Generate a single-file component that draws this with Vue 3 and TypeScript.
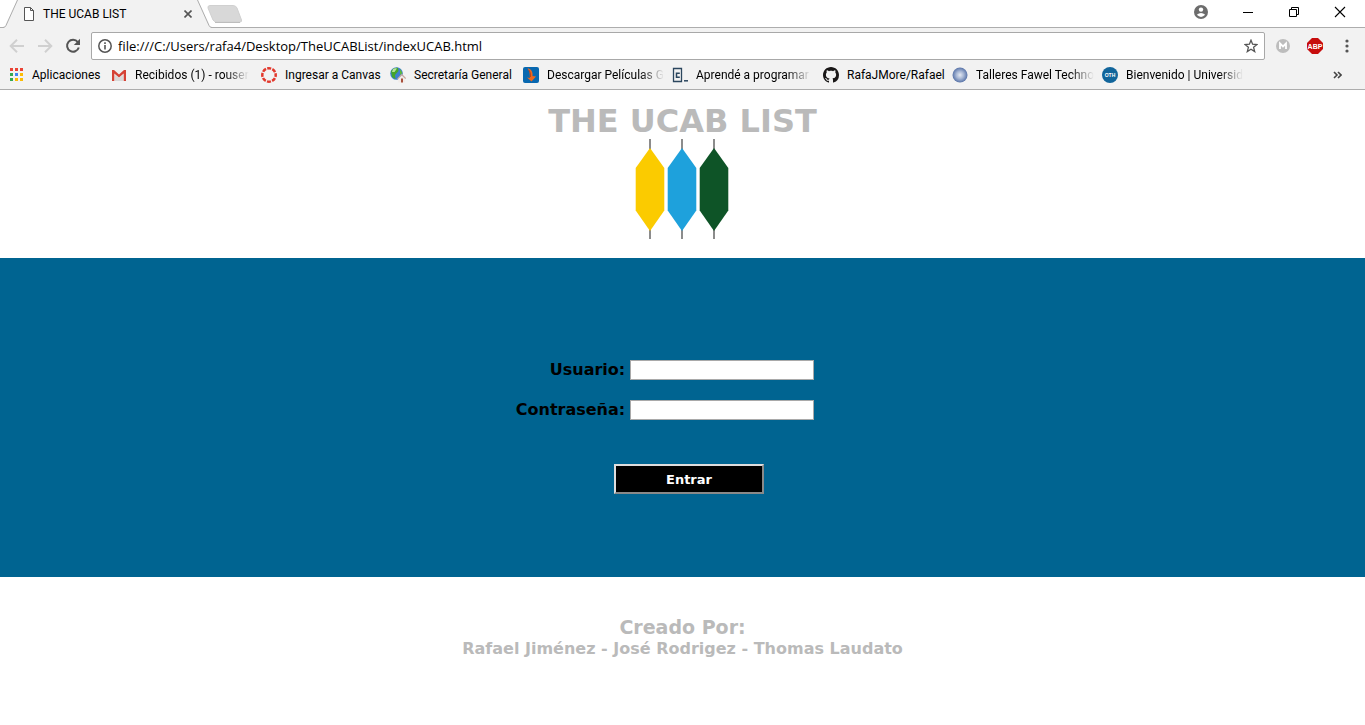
<script setup lang="ts">
import { ref } from 'vue'

interface Bookmark {
  icon: string
  label: string
  width: number
  faded?: boolean
}

const bookmarks: Bookmark[] = [
  { icon: 'apps', label: 'Aplicaciones', width: 103 },
  { icon: 'gmail', label: 'Recibidos (1) - rouser', width: 150, faded: true },
  { icon: 'canvas', label: 'Ingresar a Canvas', width: 129 },
  { icon: 'globe', label: 'Secretaría General', width: 133 },
  { icon: 'flame', label: 'Descargar Películas G', width: 149, faded: true },
  { icon: 'code', label: 'Aprendé a programar', width: 151, faded: true },
  { icon: 'github', label: 'RafaJMore/Rafael', width: 129 },
  { icon: 'orb', label: 'Talleres Fawel Techno', width: 150, faded: true },
  { icon: 'oth', label: 'Bienvenido | Universid', width: 150, faded: true },
]

const appColors = ['#ea4335', '#ea4335', '#ea4335', '#34a853', '#4285f4', '#fbbc05', '#34a853', '#fbbc05', '#fbbc05']

const shapes = [
  { x: 18, color: '#fbcb00' },
  { x: 50, color: '#1ea1dc' },
  { x: 82, color: '#0e5427' },
]

const address = ref('file:///C:/Users/rafa4/Desktop/TheUCABList/indexUCAB.html')
const user = ref('')
const password = ref('')
</script>

<template>
  <div class="window">
    <header class="browser">
      <div class="tabstrip">
        <div class="tab">
          <svg class="tab-shape" width="212" height="28" viewBox="0 0 212 28">
            <path d="M4 28 L5 26 L17 0 H198 L210 26 L211 28 Z" fill="#f2f2f2" />
            <path d="M0 27.500 H3 Q5 27.500 6 25.500 L17.500 0 M197.500 0 L209 25.500 Q210 27.500 212 27.500" fill="none" stroke="#adadad" />
          </svg>
          <svg class="tab-icon" width="12" height="14" viewBox="0 0 12 14">
            <path d="M1.500 .5 H7.500 L10.500 3.500 V13.500 H1.500 Z M7.500 .5 V3.500 H10.500" fill="#fff" stroke="#555" />
          </svg>
          <span class="tab-title">THE UCAB LIST</span>
          <button class="plain" type="button" aria-label="Cerrar pestaña">
            <svg width="8" height="8" viewBox="0 0 8 8"><path d="M0.500 .5 L7.500 7.500 M7.500 .5 L.5 7.500" stroke="#555" stroke-width="1.600" /></svg>
          </button>
        </div>
        <button class="plain new-tab" type="button" aria-label="Nueva pestaña">
          <svg width="36" height="18" viewBox="0 0 36 18"><path d="M3 .5 H26 Q29 .5 30 3 L34.500 15 Q35 17 33 17 H10 Q7 17 6 15 L1 3 Q.5 .5 3 .5Z" fill="#d8d8d8" stroke="#d0d0d0" /><path d="M8 17.500 H33" stroke="#bdbdbd" /></svg>
        </button>
        <div class="controls">
          <button class="plain" type="button" aria-label="Perfil">
            <svg width="14" height="14" viewBox="0 0 14 14"><circle cx="7" cy="7" r="7" fill="#6c6c6c" /><circle cx="7" cy="4.600" r="2.200" fill="#fff" /><path d="M2.800 9.800 Q7 6.200 11.200 9.800 Q7 14 2.800 9.800Z" fill="#fff" /></svg>
          </button>
          <button class="plain" type="button" aria-label="Minimizar">
            <svg width="12" height="12" viewBox="0 0 12 12"><path d="M1 6.500 H11" stroke="#000" /></svg>
          </button>
          <button class="plain" type="button" aria-label="Restaurar">
            <svg width="12" height="12" viewBox="0 0 12 12"><path d="M1.500 3.500 H8.500 V10.500 H1.500Z M3.500 3.500 V1.500 H10.500 V8.500 H8.500" fill="none" stroke="#000" /></svg>
          </button>
          <button class="plain" type="button" aria-label="Cerrar">
            <svg width="12" height="12" viewBox="0 0 12 12"><path d="M1 1 L11 11 M11 1 L1 11" stroke="#000" stroke-width="1.100" /></svg>
          </button>
        </div>
      </div>

      <div class="toolbar">
        <button class="plain" type="button" aria-label="Atrás">
          <svg width="16" height="16" viewBox="0 0 16 16"><path d="M15 8 H2.500 M8 1.700 L1.700 8 L8 14.300" fill="none" stroke="#d0d0d0" stroke-width="2" /></svg>
        </button>
        <button class="plain" type="button" aria-label="Adelante">
          <svg width="16" height="16" viewBox="0 0 16 16"><path d="M1 8 H13.500 M8 1.700 L14.300 8 L8 14.300" fill="none" stroke="#d0d0d0" stroke-width="2" /></svg>
        </button>
        <button class="plain" type="button" aria-label="Recargar">
          <svg width="16" height="16" viewBox="0 0 16 16"><path d="M12.800 4 A6 6 0 1 0 13.800 9.500" fill="none" stroke="#555" stroke-width="2" /><path d="M15 .8 V7 H8.800Z" fill="#555" /></svg>
        </button>
        <div class="omnibox">
          <svg width="14" height="14" viewBox="0 0 14 14"><circle cx="7" cy="7" r="6.200" fill="none" stroke="#555" stroke-width="1.500" /><path d="M7 6 V10.500 M7 3.300 V5" stroke="#555" stroke-width="1.600" /></svg>
          <input v-model="address" class="address" type="text" aria-label="Dirección" spellcheck="false" />
          <button class="plain" type="button" aria-label="Añadir a marcadores">
            <svg width="14" height="14" viewBox="0 0 14 14"><path d="M7 1.200 L8.600 5.200 L13 5.500 L9.600 8.300 L10.700 12.600 L7 10.200 L3.300 12.600 L4.400 8.300 L1 5.500 L5.400 5.200Z" fill="none" stroke="#555" stroke-width="1.300" /></svg>
          </button>
        </div>
        <div class="extensions">
          <button class="plain" type="button" aria-label="Extensión M">
            <svg width="14" height="14" viewBox="0 0 14 14"><circle cx="7" cy="7" r="7" fill="#bdbdbd" /><path d="M4 10 V4.500 L7 7.500 L10 4.500 V10" fill="none" stroke="#fff" stroke-width="1.800" /></svg>
          </button>
          <button class="plain" type="button" aria-label="Bloqueador de anuncios">
            <svg width="16" height="16" viewBox="0 0 16 16"><path d="M5 0 H11 L16 5 V11 L11 16 H5 L0 11 V5Z" fill="#c70d0d" /><text x="8" y="10.600" class="abp">ABP</text></svg>
          </button>
          <button class="plain" type="button" aria-label="Menú">
            <svg width="4" height="14" viewBox="0 0 4 14"><circle cx="2" cy="2" r="1.600" fill="#555" /><circle cx="2" cy="7" r="1.600" fill="#555" /><circle cx="2" cy="12" r="1.600" fill="#555" /></svg>
          </button>
        </div>
      </div>

      <nav class="bookmarks" aria-label="Marcadores">
        <a v-for="b in bookmarks" :key="b.icon" class="bookmark" href="#" :style="{ width: b.width + 'px' }">
          <svg class="bookmark-icon" width="16" height="16" viewBox="0 0 16 16">
            <g v-if="b.icon === 'apps'">
              <rect v-for="(c, i) in appColors" :key="i" :x="2 + (i % 3) * 5" :y="1 + Math.floor(i / 3) * 5" width="3" height="3" :fill="c" />
            </g>
            <g v-else-if="b.icon === 'gmail'">
              <path d="M2 3 H14 V14 H2Z" fill="#eee" />
              <path d="M4 8 L8 11 L12 8 V14 H4Z" fill="#d8d8d8" />
              <path d="M1 3 H3 L8 7.500 L13 3 H15 V14 H12.700 V6.500 L8 10.500 L3.300 6.500 V14 H1Z" fill="#d54235" />
            </g>
            <circle v-else-if="b.icon === 'canvas'" cx="8" cy="8" r="6.700" fill="none" stroke="#e2382c" stroke-width="2.500" stroke-dasharray="4 1.260" stroke-dashoffset="2" />
            <g v-else-if="b.icon === 'globe'">
              <circle cx="6.500" cy="6.500" r="6.300" fill="#3f7fd0" />
              <path d="M1 4 Q4 0 8 .8 L8.500 4 L5 8 L5.500 12 L2 10Z" fill="#45a52c" />
              <path d="M3 2 Q5 .8 7 1.500 L4.500 5 L2 5Z" fill="#b5e39b" />
              <path d="M10 2 L12.500 6 L10 8Z" fill="#5bb83b" />
              <path d="M8 11.500 L11.800 8 L15 11 V15.500 H8.500Z" fill="#f1ebe8" />
              <path d="M7.500 11.800 L11.800 7.500 L15.700 11.500" fill="none" stroke="#c4a79d" stroke-width="1.200" />
              <rect x="11" y="11.500" width="2" height="4" fill="#a8503c" />
            </g>
            <g v-else-if="b.icon === 'flame'">
              <rect width="16" height="16" rx="2" fill="#0868b0" />
              <path d="M4.500 1 L7.500 2.500 Q10 5 9.500 9 L13 9.500 L8.500 14.500 L4 10.500 L6.800 11 Q7.200 5 4.500 1Z" fill="#ed681d" />
              <path d="M6 3 Q8 6 7.500 10" fill="none" stroke="#a9321b" stroke-width=".7" />
            </g>
            <g v-else-if="b.icon === 'code'" fill="none" stroke="#2b465e">
              <path d="M1.500 1.500 H9.500 V14.500 H1.500Z" stroke-width="1.300" />
              <path d="M7.800 6.200 H4.500 V10.300 H7.800" stroke-width="1.500" />
              <path d="M12 13.800 H16" stroke-width="1.500" />
            </g>
            <path v-else-if="b.icon === 'github'" fill="#191717" d="M8 0C3.580 0 0 3.580 0 8c0 3.540 2.290 6.530 5.470 7.590.4.070.55-.17.55-.38 0-.19-.01-.82-.01-1.490-2.010.37-2.530-.49-2.690-.94-.09-.23-.48-.94-.82-1.130-.28-.15-.68-.52-.01-.53.63-.01 1.080.58 1.230.82.720 1.210 1.870.87 2.330.66.070-.52.280-.87.510-1.070-1.780-.2-3.640-.89-3.640-3.950 0-.87.310-1.590.82-2.150-.08-.2-.36-1.020.08-2.120 0 0 .67-.21 2.200.82.640-.18 1.320-.27 2-.27s1.360.09 2 .27c1.530-1.040 2.200-.82 2.200-.82.440 1.100.16 1.920.08 2.120.51.560.82 1.270.82 2.150 0 3.070-1.870 3.750-3.650 3.950.29.250.54.730.54 1.480 0 1.070-.01 1.930-.01 2.200 0 .21.150.46.550.38A8.010 8.010 0 0 0 16 8c0-4.420-3.580-8-8-8z" />
            <g v-else-if="b.icon === 'orb'">
              <defs>
                <radialGradient id="orb-fill"><stop offset="0" stop-color="#e4e9f3" /><stop offset=".5" stop-color="#a5b5d3" /><stop offset="1" stop-color="#5873a8" /></radialGradient>
              </defs>
              <circle cx="8" cy="8" r="7.500" fill="url(#orb-fill)" />
            </g>
            <g v-else>
              <circle cx="8" cy="8" r="8" fill="#11659b" />
              <text x="8" y="10" class="oth">OTH</text>
            </g>
          </svg>
          <span class="bookmark-label" :class="{ faded: b.faded }">{{ b.label }}</span>
        </a>
        <button class="plain more" type="button" aria-label="Más marcadores">
          <svg width="9" height="8" viewBox="0 0 9 8"><path d="M1 1 L4 4 L1 7 M5 1 L8 4 L5 7" fill="none" stroke="#444" stroke-width="1.600" /></svg>
        </button>
      </nav>
    </header>

    <main>
      <div class="brand">
        <h1>THE UCAB LIST</h1>
        <svg width="101" height="100" viewBox="0 0 101 100" role="img" aria-label="UCAB">
          <g v-for="s in shapes" :key="s.x" :transform="`translate(${s.x} 0)`">
            <rect x="-1" y="0" width="2" height="100" fill="#8c8c8c" />
            <path d="M0 9 L14.300 29 V71.500 L0 92 L-14.300 71.500 V29Z" :fill="s.color" />
          </g>
        </svg>
      </div>
      <form class="login" @submit.prevent>
        <div class="fields">
          <label for="user">Usuario:</label>
          <input id="user" v-model="user" type="text" />
          <label for="password">Contraseña:</label>
          <input id="password" v-model="password" type="password" />
        </div>
        <div class="actions">
          <button class="enter" type="submit">Entrar</button>
        </div>
      </form>
    </main>

    <footer class="credits">
      <h2>Creado Por:</h2>
      <p>Rafael Jiménez - José Rodrigez - Thomas Laudato</p>
    </footer>
  </div>
</template>

<style>
body {
  margin: 0;
  background: #fff;
}
</style>

<style scoped>
.window {
  font-family: Verdana, "DejaVu Sans", sans-serif;
}
.browser {
  font-family: "Segoe UI", Roboto, sans-serif;
  font-size: 12px;
  color: #000;
  background: #f2f2f2;
  border-bottom: 1px solid #adadad;
}
.plain {
  display: flex;
  flex: none;
  padding: 0;
  border: 0;
  background: none;
}
.tabstrip {
  display: flex;
  height: 28px;
  background: #fff;
  box-shadow: inset 0 -1px #adadad;
}
.tab {
  position: relative;
  display: flex;
  align-items: center;
  box-sizing: border-box;
  width: 212px;
  padding: 0 20px 0 23px;
}
.tab > * {
  position: relative;
}
.tab .tab-shape {
  position: absolute;
  left: 0;
  top: 0;
}
.tab-title {
  flex: 1;
  margin-left: 8px;
}
.new-tab {
  align-self: center;
  margin-left: -5px;
}
.controls {
  display: flex;
  align-items: center;
  height: 24px;
  gap: 34px;
  margin-left: auto;
  padding-right: 19px;
}
.toolbar {
  display: flex;
  align-items: center;
  height: 36px;
  padding: 0 2px 0 9px;
  gap: 12px;
}
.omnibox {
  display: flex;
  flex: 1;
  align-items: center;
  box-sizing: border-box;
  height: 28px;
  margin-left: -2px;
  padding: 0 6px;
  gap: 6px;
  border: 1px solid #a8a8a8;
  border-radius: 2px;
  background: #fff;
}
.address {
  flex: 1;
  min-width: 0;
  padding: 0;
  border: 0;
  outline: 0;
  font-family: "Segoe UI", "Open Sans", sans-serif;
  font-size: 13px;
  color: #000;
  background: none;
}
.extensions {
  display: flex;
  align-items: center;
  margin-left: -10px;
}
.extensions .plain {
  justify-content: center;
  width: 32px;
}
.abp {
  font: bold 7px "Liberation Sans", sans-serif;
  fill: #fff;
  text-anchor: middle;
}
.oth {
  font: bold 5px "Liberation Sans", sans-serif;
  fill: #fff;
  text-anchor: middle;
}
.bookmarks {
  display: flex;
  align-items: center;
  height: 22px;
  padding: 0 23px 3px 8px;
}
.bookmark {
  display: flex;
  flex: none;
  align-items: center;
  box-sizing: border-box;
  padding-right: 12px;
  gap: 8px;
  color: #000;
  text-decoration: none;
}
.bookmark-icon {
  flex: none;
}
.bookmark-label {
  flex: 1;
  white-space: nowrap;
}
.faded {
  mask-image: linear-gradient(to left, transparent, #000 24px);
}
.more {
  margin-left: auto;
}
.brand {
  display: flex;
  flex-direction: column;
  align-items: center;
  padding: 14px 0 19px;
}
h1 {
  margin: 0;
  font-size: 32px;
  line-height: 35px;
  color: #bababa;
}
.login {
  display: flex;
  flex-direction: column;
  align-items: center;
  padding: 102px 0 83px;
  gap: 44px;
  background: #006491;
}
.fields {
  display: grid;
  grid-template-columns: auto 184px;
  gap: 20px 5px;
  padding-right: 35px;
}
.fields label {
  font-size: 16px;
  font-weight: bold;
  line-height: 20px;
  text-align: right;
}
.fields input {
  box-sizing: border-box;
  width: 100%;
  height: 20px;
  padding: 1px 2px;
  border: 1px solid #a9a9a9;
  background: #fff;
}
.actions {
  padding-left: 13px;
}
.enter {
  width: 150px;
  height: 30px;
  padding: 0;
  border: 2px outset #ddd;
  font-family: inherit;
  font-size: 13px;
  font-weight: bold;
  color: #fff;
  background: #000;
}
.credits {
  padding: 38px 0;
  text-align: center;
  color: #bababa;
}
h2 {
  margin: 0;
  font-size: 19px;
  line-height: 24px;
}
p {
  margin: 0;
  font-size: 16px;
  font-weight: bold;
  line-height: 20px;
}
</style>
